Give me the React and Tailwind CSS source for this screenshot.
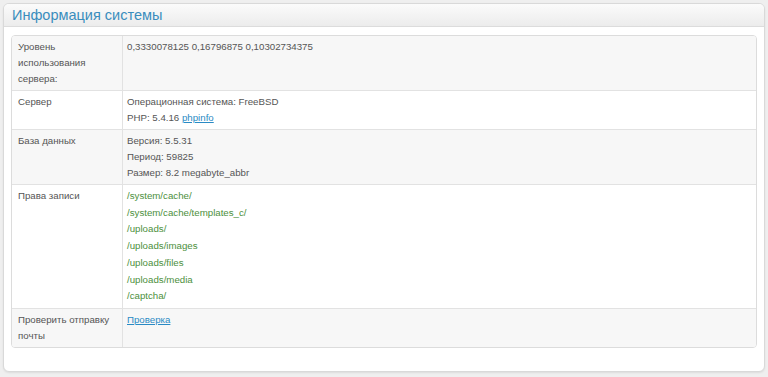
const rows = [
  {
    label: ["Уровень", "использования", "сервера:"],
    value: [<span key="a">0,3330078125 0,16796875 0,10302734375</span>],
  },
  {
    label: ["Сервер"],
    value: [
      <span key="a">Операционная система: FreeBSD</span>,
      <span key="b">
        PHP: 5.4.16{" "}
        <a href="#" className="text-[#2a8ac4] underline">
          phpinfo
        </a>
      </span>,
    ],
  },
  {
    label: ["База данных"],
    value: [
      <span key="a">Версия: 5.5.31</span>,
      <span key="b">Период: 59825</span>,
      <span key="c">Размер: 8.2 megabyte_abbr</span>,
    ],
  },
  {
    label: ["Права записи"],
    loose: true,
    value: [
      "/system/cache/",
      "/system/cache/templates_c/",
      "/uploads/",
      "/uploads/images",
      "/uploads/files",
      "/uploads/media",
      "/captcha/",
    ].map((p) => (
      <span key={p} className="text-[#4c8f3c]">
        {p}
      </span>
    )),
  },
  {
    label: ["Проверить отправку", "почты"],
    value: [
      <a key="a" href="#" className="text-[#2a8ac4] underline">
        Проверка
      </a>,
    ],
  },
];

export default function App() {
  return (
    <div className="w-[768px] h-[377px] bg-[#efefef] p-[3px] font-['Liberation_Sans',Arial,sans-serif]">
      <div className="h-[369px] rounded-md border border-[#d9d9d9] bg-white overflow-hidden shadow-[0_1px_2px_rgba(0,0,0,0.08)]">
        <div className="h-[23px] px-2 flex items-center bg-gradient-to-b from-[#fbfbfb] to-[#ececec] border-b border-[#dcdcdc]">
          <h2 className="text-[14.5px] text-[#3a8dbd] leading-none">Информация системы</h2>
        </div>
        <div className="px-[7px] pt-[8px]">
          <div className="rounded border border-[#dcdcdc] overflow-hidden text-[9.7px] leading-[16px] text-[#555]">
            {rows.map((r, i) => (
              <div
                key={i}
                className={`flex ${i > 0 ? "border-t border-[#e2e2e2]" : ""} ${
                  i % 2 === 0 ? "bg-[#f7f7f7]" : "bg-white"
                }`}
              >
                <div className="w-[111px] shrink-0 px-[6px] py-[3px] border-r border-[#e2e2e2] flex flex-col">
                  {r.label.map((l) => (
                    <span key={l}>{l}</span>
                  ))}
                </div>
                <div
                  className={`flex-1 px-[4px] py-[3px] flex flex-col items-start ${
                    r.loose ? "leading-[16.7px]" : ""
                  }`}
                >
                  {r.value}
                </div>
              </div>
            ))}
          </div>
        </div>
      </div>
    </div>
  );
}
